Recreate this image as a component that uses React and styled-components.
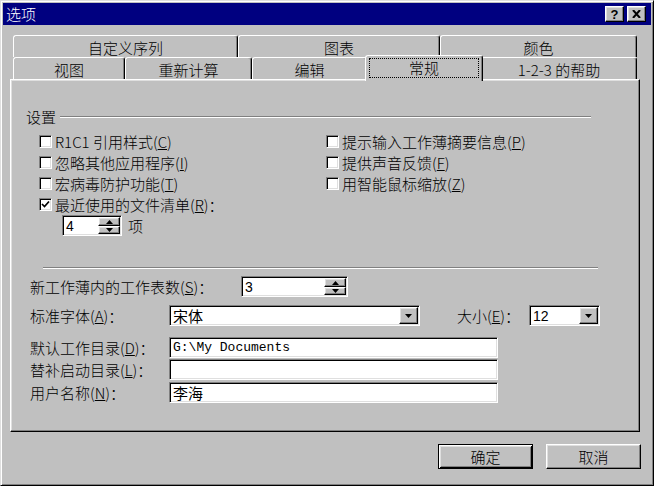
import React from "react";
import styled, { createGlobalStyle } from "styled-components";

const GlobalStyle = createGlobalStyle`
  html, body {
    margin: 0;
    padding: 0;
    background: #c0c0c0;
  }
  body {
    font-family: "Noto Sans CJK SC", "Liberation Sans", sans-serif;
    font-size: 15px;
    font-weight: 300;
    color: #000;
  }
  * {
    box-sizing: border-box;
  }
`;

// win98 bevels
const raised = `
  border: 1px solid;
  border-color: #fff #000 #000 #fff;
  box-shadow: inset -1px -1px #808080, inset 1px 1px #dfdfdf;
`;

const sunken = `
  border: 1px solid;
  border-color: #808080 #fff #fff #808080;
  box-shadow: inset 1px 1px #000, inset -1px -1px #dfdfdf;
`;

const topTabs = [
  { label: "自定义序列", w: 225 },
  { label: "图表", w: 202 },
  { label: "颜色", w: 197 },
];

const frontTabs = [
  { label: "视图", w: 112 },
  { label: "重新计算", w: 127 },
  { label: "编辑", w: 115 },
  { label: "常规", w: 114, active: true },
  { label: "1-2-3 的帮助", w: 156 },
];

export default function App() {
  return (
    <>
      <GlobalStyle />
      <Window>
        <TitleBar>
          <Title>选项</Title>
          <CaptionButton>
            <Question>?</Question>
          </CaptionButton>
          <CaptionButton>
            <svg width="9" height="8" viewBox="0 0 9 8">
              <path d="M1 0 L8 8 M8 0 L1 8" stroke="#000" strokeWidth="2" />
            </svg>
          </CaptionButton>
        </TitleBar>

        <TabStrip>
          <TabRow>
            {topTabs.map((t) => (
              <Tab key={t.label} $w={t.w}>
                {t.label}
              </Tab>
            ))}
          </TabRow>
          <TabRow>
            {frontTabs.map((t) => (
              <Tab key={t.label} $w={t.w} $active={t.active}>
                {t.active ? <FocusRect>{t.label}</FocusRect> : t.label}
              </Tab>
            ))}
          </TabRow>
        </TabStrip>

        <Panel>
          <GroupHeader>
            <span>设置</span>
            <Etched />
          </GroupHeader>

          <CheckGrid>
            <CheckItem>
              <CheckBox />
              <span>R1C1 引用样式(<u>C</u>)</span>
            </CheckItem>
            <CheckItem>
              <CheckBox />
              <span>提示输入工作薄摘要信息(<u>P</u>)</span>
            </CheckItem>
            <CheckItem>
              <CheckBox />
              <span>忽略其他应用程序(<u>I</u>)</span>
            </CheckItem>
            <CheckItem>
              <CheckBox />
              <span>提供声音反馈(<u>F</u>)</span>
            </CheckItem>
            <CheckItem>
              <CheckBox />
              <span>宏病毒防护功能(<u>T</u>)</span>
            </CheckItem>
            <CheckItem>
              <CheckBox />
              <span>用智能鼠标缩放(<u>Z</u>)</span>
            </CheckItem>
            <CheckItem>
              <CheckBox>
                <svg width="9" height="9" viewBox="0 0 9 9">
                  <path d="M1 4 L3.5 6.5 L8 1.5" stroke="#000" strokeWidth="1.7" fill="none" />
                </svg>
              </CheckBox>
              <span>最近使用的文件清单(<u>R</u>)：</span>
            </CheckItem>
          </CheckGrid>

          <SpinRow>
            <Spinner value="4" width={60} />
            <span>项</span>
          </SpinRow>

          <Separator />

          <FormRow $mt={7}>
            <Label $w={211}>新工作薄内的工作表数(<u>S</u>)：</Label>
            <Spinner value="3" width={107} />
          </FormRow>

          <FormRow $mt={8}>
            <Label $w={139}>标准字体(<u>A</u>)：</Label>
            <Combo value="宋体" width={251} $cjk />
            <Label $w={72} $ml={37}>大小(<u>E</u>)：</Label>
            <Combo value="12" width={71} />
          </FormRow>

          <FormRow $mt={11}>
            <Label $w={139}>默认工作目录(<u>D</u>)：</Label>
            <TextField $w={329} $mono>G:\My Documents</TextField>
          </FormRow>

          <FormRow $mt={1}>
            <Label $w={139}>替补启动目录(<u>L</u>)：</Label>
            <TextField $w={329} />
          </FormRow>

          <FormRow $mt={2}>
            <Label $w={139}>用户名称(<u>N</u>)：</Label>
            <TextField $w={329}>李海</TextField>
          </FormRow>
        </Panel>

        <ButtonRow>
          <PushButton $default>确定</PushButton>
          <PushButton>取消</PushButton>
        </ButtonRow>
      </Window>
    </>
  );
}

function Arrow({ up }) {
  return (
    <svg width="7" height="4" viewBox="0 0 7 4">
      <polygon points={up ? "3.5,0 7,4 0,4" : "0,0 7,0 3.5,4"} fill="#000" />
    </svg>
  );
}

function Spinner({ value, width }) {
  return (
    <FieldBox $w={width}>
      <FieldText>{value}</FieldText>
      <SpinButtons>
        <SpinButton $h={9}>
          <Arrow up />
        </SpinButton>
        <SpinButton $h={8}>
          <Arrow />
        </SpinButton>
      </SpinButtons>
    </FieldBox>
  );
}

function Combo({ value, width, $cjk }) {
  return (
    <FieldBox $w={width}>
      <FieldText $cjk={$cjk}>{value}</FieldText>
      <DropButton>
        <Arrow />
      </DropButton>
    </FieldBox>
  );
}

const Window = styled.div`
  width: 654px;
  height: 486px;
  padding: 2px;
  background: #c0c0c0;
  border: 1px solid;
  border-color: #dfdfdf #000 #000 #dfdfdf;
  box-shadow: inset 1px 1px #fff, inset -1px -1px #808080;
  display: flex;
  flex-direction: column;
`;

const TitleBar = styled.div`
  height: 22px;
  background: #000080;
  color: #fff;
  display: flex;
  align-items: center;
  gap: 3px;
  padding: 0 5px 0 3px;
`;

const Title = styled.div`
  flex: 1;
  font-size: 15px;
  line-height: 16px;
`;

const CaptionButton = styled.div`
  width: 19px;
  height: 16px;
  ${raised}
  background: #c0c0c0;
  display: flex;
  align-items: center;
  justify-content: center;
`;

const Question = styled.span`
  font-family: "Liberation Sans", Arial, sans-serif;
  font-weight: bold;
  font-size: 13px;
  line-height: 13px;
  color: #000;
`;

const TabStrip = styled.div`
  margin: 10px 0 0 10px;
  width: 624px;
  display: flex;
  flex-direction: column;
`;

const TabRow = styled.div`
  display: flex;
  height: 22px;
`;

const Tab = styled.div`
  flex: none;
  width: ${(p) => (p.$active ? p.$w + 4 : p.$w)}px;
  background: #c0c0c0;
  border: 1px solid;
  border-bottom: none;
  border-color: #fff #000 transparent #fff;
  border-radius: 3px 3px 0 0;
  box-shadow: inset -1px 0 #808080;
  display: flex;
  align-items: center;
  justify-content: center;
  padding-top: 2px;
  line-height: 16px;
  white-space: nowrap;
  ${(p) =>
    p.$active &&
    `
    position: relative;
    z-index: 1;
    margin: -2px -2px -2px;
    padding: 0 3px 2px 3px;
  `}
`;

const FocusRect = styled.div`
  flex: 1;
  height: 20px;
  outline: 1px dotted #000;
  outline-offset: -1px;
  display: flex;
  align-items: center;
  justify-content: center;
`;

const Panel = styled.div`
  margin-left: 7px;
  width: 630px;
  height: 353px;
  ${raised}
  display: flex;
  flex-direction: column;
`;

const GroupHeader = styled.div`
  margin: 29px 0 0 15px;
  width: 565px;
  height: 16px;
  line-height: 16px;
  display: flex;
  align-items: center;
  gap: 4px;
`;

const Etched = styled.div`
  flex: 1;
  height: 2px;
  border-top: 1px solid #808080;
  border-bottom: 1px solid #fff;
`;

const CheckGrid = styled.div`
  margin: 6px 0 0 28px;
  display: grid;
  grid-template-columns: 287px auto;
  grid-auto-rows: 21px;
`;

const CheckItem = styled.div`
  display: flex;
  align-items: center;
  gap: 3px;
  line-height: 16px;
  white-space: nowrap;
`;

const CheckBox = styled.div`
  width: 13px;
  height: 13px;
  background: #fff;
  ${sunken}
  display: flex;
  align-items: center;
  justify-content: center;
`;

const SpinRow = styled.div`
  margin-left: 51px;
  height: 21px;
  display: flex;
  align-items: center;
  gap: 6px;
  line-height: 16px;
`;

const Separator = styled.div`
  margin: 31px 0 0 32px;
  width: 555px;
  height: 2px;
  border-top: 1px solid #808080;
  border-bottom: 1px solid #fff;
`;

const FormRow = styled.div`
  margin: ${(p) => p.$mt}px 0 0 19px;
  height: 21px;
  display: flex;
  align-items: center;
`;

const Label = styled.span`
  flex: none;
  width: ${(p) => p.$w}px;
  margin-left: ${(p) => p.$ml || 0}px;
  line-height: 16px;
  white-space: nowrap;
`;

const FieldBox = styled.div`
  width: ${(p) => p.$w}px;
  height: 21px;
  background: #fff;
  ${sunken}
  padding: 1px;
  display: flex;
  align-items: stretch;
`;

const FieldText = styled.div`
  flex: 1;
  padding-left: 2px;
  display: flex;
  align-items: center;
  font-family: ${(p) =>
    p.$cjk
      ? `"Noto Sans CJK SC", sans-serif`
      : `"Liberation Sans", Arial, sans-serif`};
  font-size: ${(p) => (p.$cjk ? 15 : 14)}px;
  font-weight: 400;
  line-height: 16px;
`;

const SpinButtons = styled.div`
  width: 22px;
  display: flex;
  flex-direction: column;
`;

const SpinButton = styled.div`
  height: ${(p) => p.$h}px;
  background: #c0c0c0;
  ${raised}
  display: flex;
  align-items: center;
  justify-content: center;
`;

const DropButton = styled.div`
  width: 19px;
  background: #c0c0c0;
  ${raised}
  display: flex;
  align-items: center;
  justify-content: center;
`;

const TextField = styled.div`
  width: ${(p) => p.$w}px;
  height: 21px;
  background: #fff;
  ${sunken}
  padding: 0 3px;
  display: flex;
  align-items: center;
  white-space: pre;
  font-family: ${(p) =>
    p.$mono ? `"Liberation Mono", monospace` : `"Noto Sans CJK SC", sans-serif`};
  font-size: ${(p) => (p.$mono ? 13 : 15)}px;
  font-weight: 400;
  line-height: 16px;
`;

const ButtonRow = styled.div`
  margin: 12px 10px 0 0;
  display: flex;
  justify-content: flex-end;
  gap: 13px;
`;

const PushButton = styled.div`
  width: 95px;
  height: 25px;
  background: #c0c0c0;
  display: flex;
  align-items: center;
  justify-content: center;
  line-height: 16px;
  ${(p) =>
    p.$default
      ? `
    border: 1px solid #000;
    box-shadow: inset 1px 1px #fff, inset -1px -1px #000,
      inset 2px 2px #dfdfdf, inset -2px -2px #808080;
  `
      : raised}
`;
